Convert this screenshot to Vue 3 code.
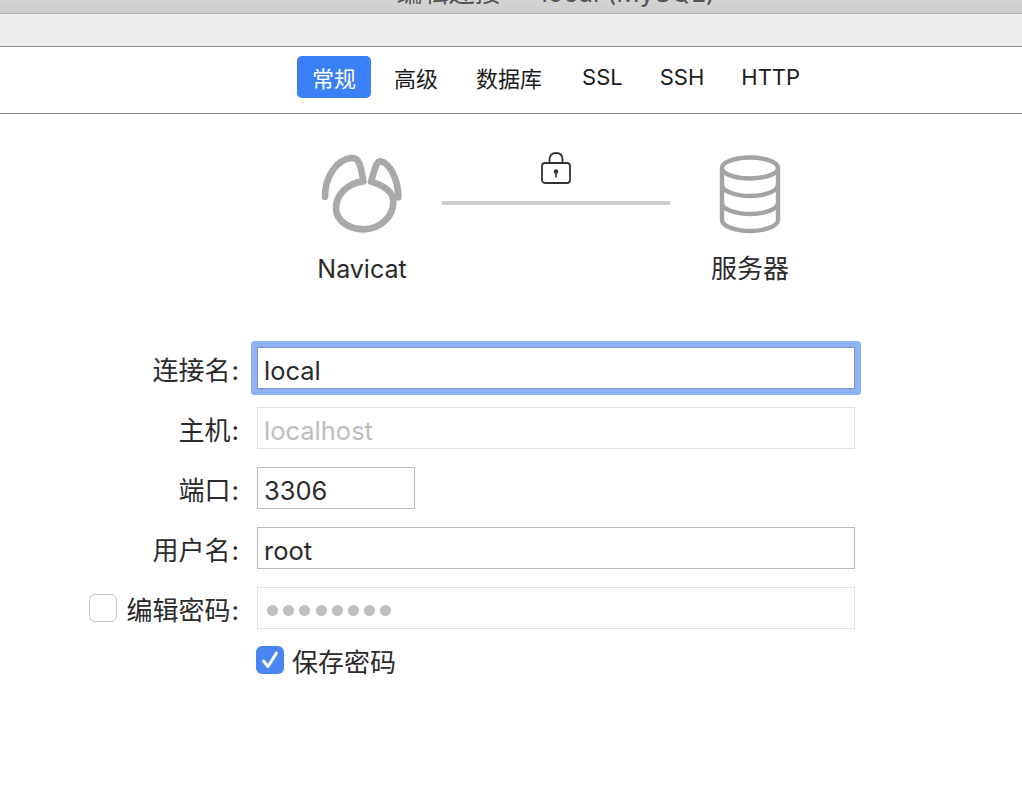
<template>
  <div class="window">
    <div class="titlebar"><span class="title">编辑连接 — local (MySQL)</span></div>
    <div class="toolbar"></div>

    <nav class="tabs">
      <button v-for="tab in tabs" :key="tab" class="tab" :class="{ active: tab === '常规' }">{{ tab }}</button>
    </nav>

    <section class="diagram">
      <div class="node client">
        <svg class="node-icon" width="90" height="90" viewBox="51 30 270 270" fill="none" stroke="#a9a9a9" stroke-width="20" stroke-linecap="round" stroke-linejoin="round">
          <path d="M75 170C75 110 110 58 155 54C180 52 183 85 190 124C140 130 108 165 108 205C108 245 150 268 190 268C240 268 280 230 280 185C280 160 262 140 213 125C223 95 228 62 242 64C270 70 295 120 295 172" />
        </svg>
        <span>Navicat</span>
      </div>

      <div class="link">
        <svg class="lock" width="32" height="34" viewBox="0 0 32 34" fill="none" stroke="#333" stroke-width="1.8">
          <rect x="2" y="12" width="28" height="20" rx="3" />
          <path d="M9.500 12V8.500C9.500 4.500 12 2 16 2C20 2 22.500 4.500 22.500 8.500V12" />
          <circle cx="16" cy="20.500" r="2.200" fill="#333" stroke="none" />
          <path d="M16 21V26.500" stroke-width="1.600" />
        </svg>
        <div class="link-line"></div>
      </div>

      <div class="node server">
        <svg class="node-icon" width="64" height="82" viewBox="0 0 64 82" fill="none" stroke="#a3a3a3" stroke-width="4.400">
          <ellipse cx="32" cy="15" rx="28" ry="10.500" />
          <path d="M4 15V67C4 73 17 78 32 78C47 78 60 73 60 67V15" />
          <path d="M4 32C4 38 17 43 32 43C47 43 60 38 60 32" />
          <path d="M4 50C4 56 17 61 32 61C47 61 60 56 60 50" />
        </svg>
        <span>服务器</span>
      </div>
    </section>

    <form class="form" @submit.prevent>
      <template v-for="row in rows" :key="row.label">
        <label class="label">
          <span v-if="row.toggle" class="check"></span>
          <span>{{ row.label }}<span class="colon">:</span></span>
        </label>
        <div class="field" :class="[row.state, { short: row.short, dots: row.dots }]">
          <template v-if="row.dots">
            <i v-for="n in row.dots" :key="n" class="dot"></i>
          </template>
          <template v-else>{{ row.value }}</template>
        </div>
      </template>

      <div class="save">
        <span class="check checked">
          <svg width="18" height="18" viewBox="0 0 18 18" fill="none" stroke="#fff" stroke-width="3" stroke-linecap="round" stroke-linejoin="round">
            <path d="M2.500 10L7 15.500L15.500 2" />
          </svg>
        </span>
        保存密码
      </div>
    </form>
  </div>
</template>

<script setup>
const tabs = ["常规", "高级", "数据库", "SSL", "SSH", "HTTP"]

const rows = [
  { label: "连接名", value: "local", state: "focused" },
  { label: "主机", value: "localhost", state: "disabled" },
  { label: "端口", value: "3306", short: true },
  { label: "用户名", value: "root" },
  { label: "编辑密码", dots: 8, state: "disabled", toggle: true },
]
</script>

<style>
html,
body {
  margin: 0;
  background: #fff;
}
</style>

<style scoped>
.window {
  width: 1022px;
  height: 808px;
  overflow: hidden;
  background: #fff;
  color: #2b2b2b;
  font-family: Inter, "Noto Sans CJK SC", sans-serif;
  font-size: 26px;
}

/* ===== Window chrome ===== */
.titlebar {
  height: 13px;
  overflow: hidden;
  text-align: center;
  background: linear-gradient(#d4d4d4, #cdcdcd);
  border-bottom: 1px solid #b0b0b0;
}

.title {
  display: block;
  margin-top: -25px;
  padding-left: 90px;
  line-height: 36px;
  font-size: 26px;
  color: #555;
}

.toolbar {
  height: 32px;
  background: #ececec;
  border-bottom: 1px solid #8e8e8e;
}

/* ===== Tabs ===== */
.tabs {
  display: flex;
  gap: 8px;
  height: 67px;
  padding: 9px 0 0 297px;
  box-sizing: border-box;
  border-bottom: 1px solid #8e8e8e;
}

.tab {
  height: 42px;
  padding: 0 15px;
  border: none;
  border-radius: 5px;
  background: transparent;
  color: #1c1c1c;
  font: inherit;
  font-size: 22px;
}

.tab:nth-child(4) {
  margin-left: 2px;
}

.tab:nth-child(5),
.tab:nth-child(6) {
  margin-left: -1px;
}

.tab.active {
  background: #3b80f6;
  color: #fff;
}

/* ===== Connection diagram ===== */
.diagram {
  display: flex;
  height: 233px;
  box-sizing: border-box;
  padding: 35px 0 0 317px;
}

.node {
  display: flex;
  flex-direction: column;
  align-items: center;
  width: 90px;
}

.node-icon {
  flex: none;
}

.node span {
  line-height: 32px;
}

.client span {
  font-size: 25px;
}

.client .node-icon {
  margin: 1px 0 13px;
}

.server {
  width: 78px;
  margin-left: 41px;
}

.server .node-icon {
  margin: 4px 0 18px;
}

.link {
  display: flex;
  flex-direction: column;
  align-items: center;
  width: 228px;
  margin-left: 35px;
}

.lock {
  margin-top: 2px;
}

.link-line {
  width: 100%;
  height: 4px;
  margin-top: 16px;
  background: #ccc;
}

/* ===== Form ===== */
.form {
  display: grid;
  grid-template-columns: 167px 598px;
  column-gap: 18px;
  row-gap: 18px;
  padding-left: 72px;
}

.label {
  display: flex;
  align-items: center;
  justify-content: flex-end;
  gap: 9px;
}

.colon {
  margin-left: 1px;
}

.field {
  display: flex;
  align-items: center;
  height: 42px;
  box-sizing: border-box;
  padding: 4px 0 0 6px;
  border: 1px solid #bcbcbc;
  background: #fff;
  font-size: 25.500px;
}

.field.short {
  width: 158px;
}

.field.dots {
  padding-left: 9px;
}

.field.disabled {
  border: 1px solid #e2e2e2;
  color: #bdbdbd;
}

.field.focused {
  border: 1px solid #7f97c4;
  border-radius: 1px;
  box-shadow: 0 0 0 6px #8fb3f2;
}

.dot {
  flex: none;
  width: 11px;
  height: 11px;
  margin-right: 5.200px;
  border-radius: 50%;
  background: #c0c0c0;
}

.check {
  display: inline-flex;
  align-items: center;
  justify-content: center;
  flex: none;
  width: 28px;
  height: 28px;
  box-sizing: border-box;
  border: 1px solid #c6c6c6;
  border-radius: 6px;
  background: #fff;
}

.check.checked {
  border: none;
  background: #4a86f3;
}

.save {
  grid-column: 2;
  display: flex;
  align-items: center;
  gap: 8px;
  height: 28px;
  margin: -1px 0 0 -1px;
}
</style>
